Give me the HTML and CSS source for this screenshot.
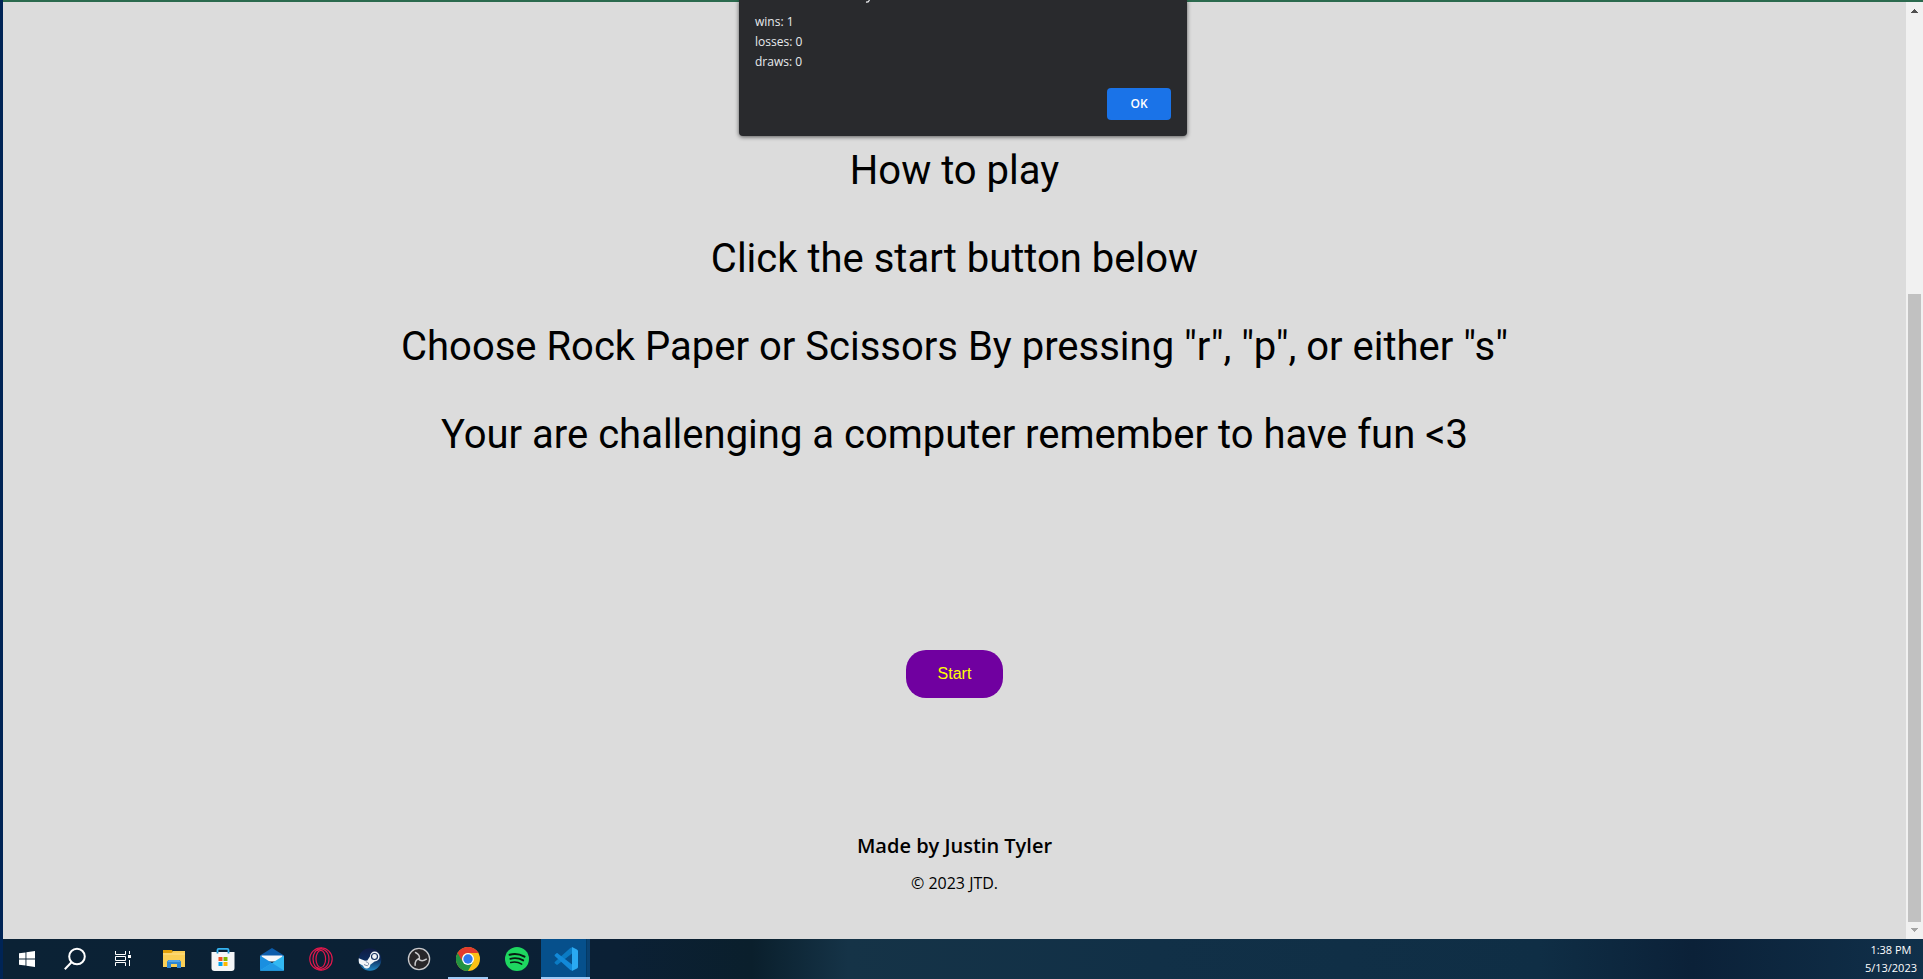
FILE: index.html
```html
<!DOCTYPE html>
<html lang="en">
<head>
<meta charset="utf-8">
<title>Rock Paper Scissors</title>
<link rel="stylesheet" href="styles.css">
</head>
<body>
<div class="desktop">
  <div class="window">
    <div class="page">
      <main class="rules">
        <p>How to play</p>
        <p>Click the start button below</p>
        <p>Choose Rock Paper or Scissors By pressing "r", "p", or either "s"</p>
        <p>Your are challenging a computer remember to have fun &lt;3</p>
        <button class="start" type="button">Start</button>
      </main>
      <footer class="credits">
        <h3>Made by Justin Tyler</h3>
        <p>© 2023 JTD.</p>
      </footer>
    </div>
    <div class="scrollbar">
      <svg class="arrow" viewBox="0 0 17 17"><path fill="#505050" d="M8 7h1v1h1v1h1v1h1v1H5v-1h1V9h1V8h1z"/></svg>
      <div class="track"><div class="thumb"></div></div>
      <svg class="arrow" viewBox="0 0 17 17"><path fill="#a3a3a3" d="M5 6h7v1h-1v1h-1v1H9v1H8V9H7V8H6V7H5z"/></svg>
    </div>
    <div class="dialog" role="alertdialog" aria-label="Score">
      <svg class="dialog-title" viewBox="0 0 448 10" aria-hidden="true"><path fill="none" stroke="#e8eaed" stroke-width="1.300" d="M130.500-1L129.500.5Q129 1.200 127 1"/></svg>
      <div class="score">wins: 1<br>losses: 0<br>draws: 0</div>
      <button class="ok" type="button">OK</button>
    </div>
  </div>
  <nav class="taskbar" aria-label="Taskbar">
    <div class="system">
      <button class="slot" type="button" aria-label="Start menu"><svg viewBox="0 0 24 24"><path fill="#fff" d="M4 6.3l6.5-.9v6.1H4zM11.4 5.2L20 4v7.500h-8.600zM4 12.500h6.500v6.100L4 17.700zM11.400 12.500H20V20l-8.600-1.200z"/></svg></button>
      <button class="slot" type="button" aria-label="Search"><svg viewBox="0 0 24 24" fill="none" stroke="#fff" stroke-width="2"><circle cx="14" cy="9.500" r="7.800"/><path d="M8.500 15.200L1.800 22.300"/></svg></button>
      <button class="slot" type="button" aria-label="Task view"><svg viewBox="0 0 24 24"><path fill="none" stroke="#fff" d="M4.500 4v3.500h10V4M4.500 19v-3.500h10V19M4.500 9.500h10v4h-10zM18.500 4v3M18.500 13v6"/><path fill="#fff" d="M17 8h3v3h-3z"/></svg></button>
    </div>
    <div class="apps">
      <button class="slot" type="button" aria-label="File Explorer"><svg viewBox="0 0 24 24"><path fill="#e3a008" d="M1 3h9l1 2-2 2H1z"/><path fill="#fbcf56" d="M1 6h8.500l1.500-2h12v16H1z"/><path fill="#ffe08a" d="M1 6h22v2H1z" opacity=".5"/><path fill="#2f86d2" d="M5 21v-6.500L6.500 13h11l1.500 1.500V21h-4v-4H9v4z"/><path fill="#52a5ea" d="M7 13h10l1.500 2h-13z"/></svg></button>
      <button class="slot" type="button" aria-label="Microsoft Store"><svg viewBox="0 0 24 24"><path fill="none" stroke="#35b5f3" stroke-width="1.800" d="M6.500 6.500V3q0-1.100 1.100-1.100h8.800q1.100 0 1.100 1.100v3.500"/><path fill="#f5f6f7" d="M.5 5h23v16q0 3-3 3h-17q-3 0-3-3z"/><path fill="#1c93d2" d="M5.600 5h1.800v1.500H5.600zM16.600 5h1.800v1.500h-1.800z"/><path fill="#f25022" d="M7.500 10h4v4h-4z"/><path fill="#7fba00" d="M12.500 10h4v4h-4z"/><path fill="#00a4ef" d="M7.500 15h4v4h-4z"/><path fill="#ffb900" d="M12.500 15h4v4h-4z"/></svg></button>
      <button class="slot" type="button" aria-label="Mail"><svg viewBox="0 0 24 24"><path fill="#0b5cab" d="M0 8.500L12 1l12 7.500V14H0z"/><path fill="#f4f7fa" d="M1.500 8.500h21v6h-21z"/><path fill="#1a8fe0" d="M0 8.500L24 23.500H0z"/><path fill="#32b8f2" d="M24 8.500L12 16 0 23.500h24z"/><path fill="#2199e5" d="M12 16l12 7.500H0z"/></svg></button>
      <button class="slot" type="button" aria-label="Opera GX"><svg viewBox="0 0 24 24" fill="none" stroke="#e0184c" stroke-width="1.200"><circle cx="12" cy="12" r="11.200"/><ellipse cx="11.800" cy="12" rx="4.800" ry="8.600"/><path d="M8 3.800C12-.2 20 3 20 12S12 24.200 8 20.200M13 1C1 2 1 22 13 23"/></svg></button>
      <button class="slot" type="button" aria-label="Steam"><svg viewBox="0 0 24 24"><defs><linearGradient id="steam" x2="0" y2="1"><stop stop-color="#101c44"/><stop offset=".5" stop-color="#0c2b5c"/><stop offset="1" stop-color="#218ac6"/></linearGradient></defs><circle cx="12" cy="12.500" r="11.300" fill="url(#steam)"/><path fill="#f1f4f7" d="M.8 11.200L7 13.700l2.300-.2 2.600-4c.2-3 2.100-5 4.700-5a5 5 0 0 1 0 10l-4.300 3.200c0 2.300-1.600 3.700-3.700 3.700-1.700 0-3.100-1.100-3.500-2.700L1.200 16.500C.7 15 .6 12.500.8 11.200z"/><circle cx="16.500" cy="9.500" r="3" fill="none" stroke="#16305e" stroke-width="1.200"/><path fill="none" stroke="#7b8ba5" d="M6 17.500l2 .9a1.700 1.700 0 1 0 1.300-3.100l-1.500-.6"/></svg></button>
      <button class="slot" type="button" aria-label="OBS Studio"><svg viewBox="0 0 24 24"><circle cx="12" cy="12" r="10.600" fill="#282629" stroke="#c9c9cc" stroke-width="1.300"/><g fill="none" stroke="#c9c9cc" stroke-width="1.500" stroke-linecap="round"><path id="blade" d="M12 12.500c1.500-3-.5-5.500-3.500-7"/><use href="#blade" transform="rotate(120 12 12)"/><use href="#blade" transform="rotate(240 12 12)"/></g></svg></button>
      <button class="slot running" type="button" aria-label="Google Chrome"><svg viewBox="0 0 24 24"><circle cx="12" cy="12" r="12" fill="#fbc116"/><path fill="#229342" d="M1.600 6L12 12l5.200 3L12 24A12 12 0 0 1 1.600 6z"/><path fill="#e33b2e" d="M1.600 6a12 12 0 0 1 20.800 0H12a6 6 0 0 0-5.200 9z"/><circle cx="12" cy="12" r="6" fill="#fff"/><circle cx="12" cy="12" r="4.700" fill="#2f78ed"/></svg></button>
      <button class="slot" type="button" aria-label="Spotify"><svg viewBox="0 0 24 24"><circle cx="12" cy="12" r="12" fill="#1ed760"/><g fill="none" stroke="#081b12" stroke-linecap="round"><path stroke-width="2.200" d="M4.700 7.700q7.600-2 14.800 1.900"/><path stroke-width="1.900" d="M5.300 11.800q6.800-1.900 12.900 1.600"/><path stroke-width="1.500" d="M5.700 15.600q5.800-1.500 11 1.500"/></g></svg></button>
      <button class="slot active" type="button" aria-label="Visual Studio Code"><svg viewBox="0 0 24 24"><path fill="#0b7bc4" d="M1 14.800c-.6.600-.6 1.100 0 1.600l1.300 1.200c.5.400 1 .4 1.500 0L18 6.600V.5c-.6-.3-1.200 0-1.700.4z"/><path fill="#1289d8" d="M1 9.200c-.6-.6-.6-1.100 0-1.600l1.300-1.200c.5-.4 1-.4 1.500 0L18 17.400v6.100c-.6.300-1.200 0-1.700-.4z"/><path fill="#2aa9f2" d="M18 .1l4.900 2.300c.7.400 1.100.9 1.100 1.700v15.800c0 .8-.4 1.300-1.100 1.700L18 23.900z"/></svg></button>
    </div>
    <div class="clock"><time>1:38 PM</time><time>5/13/2023</time></div>
  </nav>
</div>
</body>
</html>
```
FILE: styles.css
```css
* { box-sizing: border-box; }

body { margin: 0; }

button {
  border: 0;
  font: inherit;
  cursor: pointer;
}

.desktop {
  display: flex;
  flex-direction: column;
  height: 100vh;
  overflow: hidden;
  border-left: 3px solid #002456;
}

.window {
  position: relative;
  flex: 1;
  display: flex;
  min-height: 0;
  overflow: hidden;
}

.page,
.scrollbar { border-top: 2px solid #2b6a4e; }

.page {
  flex: 1;
  padding-top: 145px;
  background: #dcdcdc;
  color: #000;
  text-align: center;
}

.rules {
  font: 40px/48px Roboto, sans-serif;
}

.rules p { margin: 0 0 40px; }

.start {
  display: block;
  margin: 191px auto 0;
  padding: 15px 32px;
  border-radius: 20px;
  background: #7000a0;
  color: #ff0;
  font: 16px/18px "Liberation Sans", Arial, sans-serif;
}

.credits {
  margin-top: 135px;
  font-family: "Trebuchet MS", "Open Sans", sans-serif;
}

.credits h3 {
  margin: 0;
  font-size: 20px;
  font-weight: 600;
  line-height: 26px;
}

.credits p {
  margin: 13px 0 0;
  font-size: 16px;
  line-height: 22px;
}

.scrollbar {
  display: flex;
  flex-direction: column;
  width: 17px;
  background: #f1f1f1;
}

.arrow {
  width: 17px;
  height: 17px;
}

.track {
  flex: 1;
  display: flex;
  flex-direction: column;
  justify-content: flex-end;
  padding: 0 2px;
}

.thumb {
  height: 69.5%;
  background: #c1c1c1;
}

.dialog {
  position: absolute;
  top: 0;
  left: 50%;
  display: flex;
  flex-direction: column;
  width: 448px;
  margin-left: -224px;
  padding-bottom: 16px;
  border-radius: 0 0 4px 4px;
  background: #292a2d;
  box-shadow: 0 1px 4px rgba(0, 0, 0, .6);
  color: #e8eaed;
  font: 12px/20px "Segoe UI", "Open Sans", sans-serif;
}

.dialog-title {
  height: 12px;
  width: 448px;
}

.score { padding: 0 16px; }

.ok {
  align-self: flex-end;
  width: 64px;
  height: 32px;
  margin: 16px 16px 0 0;
  border-radius: 4px;
  background: #1a73e8;
  color: #fff;
  font-weight: 600;
}

.taskbar {
  display: flex;
  height: 40px;
  background: linear-gradient(90deg, #0b2235 0, #0b2035 32%, #0a1f2c 39%, #153347 44%, #113047 60%, #0f2e45 80%, #0b2138 88%, #10304a 100%);
}

.system,
.apps { display: flex; }

.apps { margin-left: 2px; }

.slot {
  display: grid;
  place-items: center;
  width: 48px;
  height: 40px;
  padding: 0;
  background: none;
}

.apps .slot { width: 49px; }

.slot svg {
  width: 24px;
  height: 24px;
}

.slot.running {
  background: linear-gradient(#9cc9f5, #9cc9f5) center bottom / 40px 2px no-repeat;
}

.slot.active {
  background: linear-gradient(90deg, #06508c 45px, #033a66 45px, #033a66 46px, #0a4272 46px);
  box-shadow: inset 0 -2px #9cc9f5;
}

.clock {
  display: flex;
  flex-direction: column;
  margin-left: auto;
  padding: 2px 6px 0 0;
  color: #fff;
  font: 11px/18px "Segoe UI", "Open Sans", sans-serif;
  text-align: center;
}
```
